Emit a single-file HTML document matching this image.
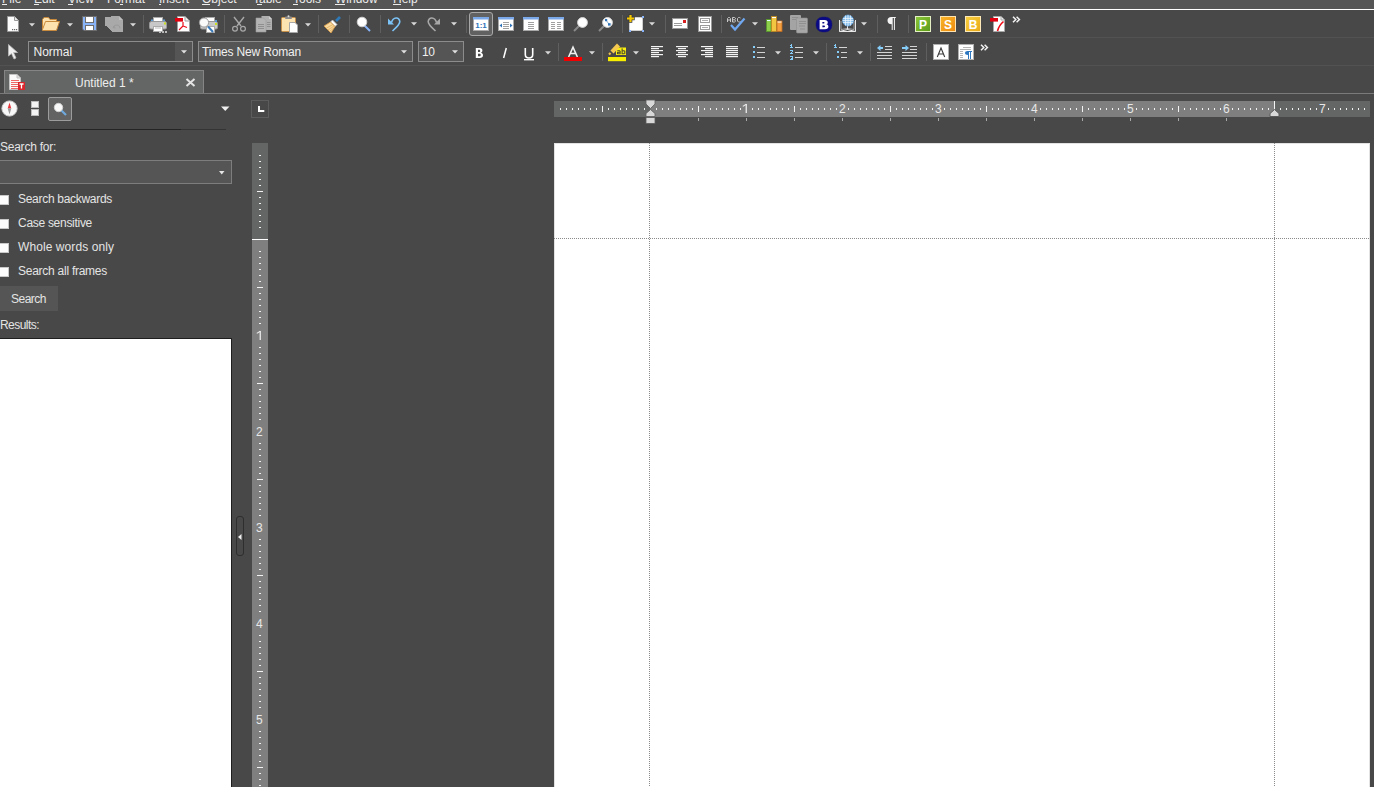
<!DOCTYPE html>
<html><head><meta charset="utf-8"><style>
html,body{margin:0;padding:0}
body{width:1374px;height:787px;overflow:hidden;position:relative;background:#484848;font-family:"Liberation Sans",sans-serif}
body>div,body>span,body>svg{position:absolute}
.t{white-space:nowrap;line-height:1}
</style></head><body>
<div style="left:0px;top:0px;width:1374px;height:9px;background:#555555"></div>
<span class="t" style="left:2px;top:-7px;font-size:12px;color:#ececec;">File</span>
<span class="t" style="left:34px;top:-7px;font-size:12px;color:#ececec;">Edit</span>
<span class="t" style="left:68px;top:-7px;font-size:12px;color:#ececec;">View</span>
<span class="t" style="left:107px;top:-7px;font-size:12px;color:#ececec;">Format</span>
<span class="t" style="left:159px;top:-7px;font-size:12px;color:#ececec;">Insert</span>
<span class="t" style="left:202px;top:-7px;font-size:12px;color:#ececec;">Object</span>
<span class="t" style="left:253px;top:-7px;font-size:12px;color:#ececec;">Table</span>
<span class="t" style="left:293px;top:-7px;font-size:12px;color:#ececec;">Tools</span>
<span class="t" style="left:335px;top:-7px;font-size:12px;color:#ececec;">Window</span>
<span class="t" style="left:393px;top:-7px;font-size:12px;color:#ececec;">Help</span>
<div style="left:0px;top:4px;width:0px;height:0px;"></div>
<div style="left:2px;top:4px;width:5px;height:1px;background:#ececec"></div>
<div style="left:34px;top:4px;width:5px;height:1px;background:#ececec"></div>
<div style="left:68px;top:4px;width:5px;height:1px;background:#ececec"></div>
<div style="left:120px;top:4px;width:3px;height:1px;background:#ececec"></div>
<div style="left:159px;top:4px;width:2px;height:1px;background:#ececec"></div>
<div style="left:202px;top:4px;width:8px;height:1px;background:#ececec"></div>
<div style="left:257px;top:4px;width:5px;height:1px;background:#ececec"></div>
<div style="left:293px;top:4px;width:5px;height:1px;background:#ececec"></div>
<div style="left:335px;top:4px;width:10px;height:1px;background:#ececec"></div>
<div style="left:393px;top:4px;width:8px;height:1px;background:#ececec"></div>
<div style="left:0px;top:9px;width:1374px;height:1px;background:#ffffff"></div>
<div style="left:0px;top:37px;width:1374px;height:1px;background:#525252"></div>
<div style="left:0px;top:65px;width:1374px;height:1px;background:#525252"></div>
<div style="left:0px;top:93px;width:1374px;height:1px;background:#7a7a7a"></div>
<svg style="left:6px;top:15px" width="14" height="18" viewBox="0 0 14 18"><path d="M1.5 1.5H8.5L12.5 5.5V16.5H1.5Z" fill="#fdfdfd" stroke="#9a9a9a"/><path d="M8.5 1.5V5.5H12.5" fill="#e8e8e8" stroke="#9a9a9a"/><rect x="6" y="14" width="1.2" height="1.2" fill="#666"/><rect x="8" y="14" width="1.2" height="1.2" fill="#666"/><rect x="10" y="14" width="1.2" height="1.2" fill="#666"/></svg>
<svg style="left:29px;top:23px" width="6" height="4" viewBox="0 0 6 4"><path d="M0 0.2H6L3 3.4Z" fill="#d8d8d8"/></svg>
<svg style="left:41px;top:16px" width="20" height="16" viewBox="0 0 20 16"><path d="M1.5 13.5V3.5L3 1.5H7.5L9 3.5H15.5V5.5" fill="#fde2ae" stroke="#c88a3c"/><path d="M1.5 13.5L4.5 5.5H18.5L15.5 14.5H1.5Z" fill="#fde3b0" stroke="#c88a3c"/></svg>
<svg style="left:67px;top:23px" width="6" height="4" viewBox="0 0 6 4"><path d="M0 0.2H6L3 3.4Z" fill="#d8d8d8"/></svg>
<svg style="left:81px;top:15px" width="17" height="17" viewBox="0 0 17 17"><path d="M1.5 1.5H15.5V15.5H3L1.5 14Z" fill="#8ab4f8" stroke="#6e6e6e"/><rect x="4.5" y="1.5" width="8" height="6" fill="#fff" stroke="#6e6e6e"/><rect x="4.5" y="10.5" width="8" height="5" fill="#fff" stroke="#6e6e6e"/></svg>
<svg style="left:104px;top:15px" width="20" height="18" viewBox="0 0 20 18"><path d="M1 2H7V1H15L19 5V17H8V16H7V15H6V14H5V13H4V12H3V11H1Z" fill="#a9a9a9"/><path d="M15 1V5H19Z" fill="#bdbdbd"/><path d="M9 12.5L10.5 10.5M9 12.5L11.5 13M9.8 11.8C11 9.5 16 9 16 13.5" stroke="#999" fill="none" stroke-width="1"/></svg>
<svg style="left:130px;top:23px" width="6" height="4" viewBox="0 0 6 4"><path d="M0 0.2H6L3 3.4Z" fill="#d8d8d8"/></svg>
<svg style="left:143px;top:15px" width="1" height="18" viewBox="0 0 1 18"><rect width="1" height="100" fill="#5f5f5f"/></svg>
<svg style="left:148px;top:16px" width="20" height="18" viewBox="0 0 20 18"><rect x="5.5" y="1.5" width="9" height="4.5" fill="#fff" stroke="#aaa"/><rect x="3" y="3.5" width="2" height="2" fill="#5b9bd5"/><rect x="15" y="3.5" width="2" height="2" fill="#5b9bd5"/><path d="M1.5 7.5Q1.5 5.5 3.5 5.5H16.5Q18.5 5.5 18.5 7.5V11.5Q18.5 13 17 13H3Q1.5 13 1.5 11.5Z" fill="#c8c8c8" stroke="#999"/><rect x="16" y="6.5" width="2" height="2" fill="#c8e020"/><rect x="5.5" y="10.5" width="9" height="5" fill="#fff" stroke="#aaa"/><path d="M7 12H13" stroke="#bbb"/><rect x="11" y="15" width="2" height="2" fill="#bbb"/><rect x="14" y="15" width="2" height="2" fill="#bbb"/><rect x="17" y="15" width="2" height="2" fill="#bbb"/></svg>
<svg style="left:174px;top:15px" width="17" height="18" viewBox="0 0 17 18"><path d="M3.5 1.5H11L15.5 6V16.5H3.5Z" fill="#fff" stroke="#a0a0a0"/><path d="M11 1.5V6H15.5" fill="#eee" stroke="#a0a0a0"/><rect x="1" y="3" width="8" height="3.6" fill="#e00010"/><path d="M9 7V11L5 15M9 11L13 12.5" stroke="#e8101c" stroke-width="1.2" fill="none"/></svg>
<svg style="left:198px;top:16px" width="21" height="18" viewBox="0 0 21 18"><rect x="7.5" y="1.5" width="9" height="4" fill="#fff" stroke="#aaa"/><path d="M2.5 7.5Q2.5 5.5 4.5 5.5H17.5Q19.5 5.5 19.5 7.5V11.5Q19.5 13 18 13H4Q2.5 13 2.5 11.5Z" fill="#c8c8c8" stroke="#999"/><rect x="17" y="4" width="2" height="2" fill="#5b9bd5"/><rect x="17" y="7" width="2" height="2" fill="#c8e020"/><rect x="8.5" y="10.5" width="8" height="6" fill="#fff" stroke="#aaa"/><path d="M10 10.5L15 16" stroke="#3a7ab8" stroke-width="2"/><circle cx="6" cy="6.5" r="4.6" fill="#fafafa" stroke="#9a9a9a"/></svg>
<svg style="left:224px;top:15px" width="1" height="18" viewBox="0 0 1 18"><rect width="1" height="100" fill="#5f5f5f"/></svg>
<svg style="left:231px;top:16px" width="16" height="17" viewBox="0 0 16 17"><path d="M3 1L10 10M13 1L6 10" stroke="#a8a8a8" stroke-width="1.4" fill="none"/><circle cx="4" cy="12.8" r="2.4" fill="none" stroke="#a8a8a8" stroke-width="1.2"/><circle cx="12" cy="12.8" r="2.4" fill="none" stroke="#a8a8a8" stroke-width="1.2"/></svg>
<svg style="left:255px;top:15px" width="18" height="18" viewBox="0 0 18 18"><path d="M6.5 1H14L17 4V15H6.5Z" fill="#b0b0b0"/><path d="M14 1V4H17" fill="#d0d0d0"/><path d="M1 3H8.5L11 5.5V17H1Z" fill="#b4b4b4" stroke="#9a9a9a" stroke-width="0.6"/><path d="M3 9.5H9M3 11.5H9M3 13.5H9M12 7.5H15.5M12 9.5H15.5M12 11.5H15.5" stroke="#8e8e8e" stroke-width="1"/></svg>
<svg style="left:280px;top:15px" width="19" height="19" viewBox="0 0 19 19"><rect x="1.5" y="2.5" width="14" height="14" rx="1" fill="#fde3b0" stroke="#c89048"/><rect x="5" y="1.5" width="7" height="2.5" rx="1" fill="#8c8c8c"/><circle cx="8.5" cy="1.2" r="1" fill="#ddd"/><path d="M9.5 7.5H15L17.5 10V17.5H9.5Z" fill="#fff" stroke="#a8a8a8"/></svg>
<svg style="left:305px;top:23px" width="6" height="4" viewBox="0 0 6 4"><path d="M0 0.2H6L3 3.4Z" fill="#d8d8d8"/></svg>
<svg style="left:318px;top:15px" width="1" height="18" viewBox="0 0 1 18"><rect width="1" height="100" fill="#5f5f5f"/></svg>
<svg style="left:323px;top:15px" width="19" height="19" viewBox="0 0 19 19"><path d="M13 6L17 2" stroke="#2e7ab8" stroke-width="2.6"/><path d="M9.5 5L14 9.5L12 11.5L7.5 7Z" fill="#fff" stroke="#bbb" stroke-width="0.8"/><path d="M7.5 7L12 11.5L8 18L1 11Z" fill="#f8d89c" stroke="#d89a48" stroke-width="0.8"/><path d="M3.5 13L10 9.5M5 15L11 11M6.5 16.5L11.5 12.5" stroke="#e0a858" stroke-width="0.7"/></svg>
<svg style="left:349px;top:15px" width="1" height="18" viewBox="0 0 1 18"><rect width="1" height="100" fill="#5f5f5f"/></svg>
<svg style="left:356px;top:16px" width="16" height="17" viewBox="0 0 16 17"><path d="M8.5 9.5L14 15" stroke="#8ab4f8" stroke-width="2"/><circle cx="6" cy="6" r="4.8" fill="#fff" stroke="#d0d0d0"/></svg>
<svg style="left:380px;top:15px" width="1" height="18" viewBox="0 0 1 18"><rect width="1" height="100" fill="#5f5f5f"/></svg>
<svg style="left:387px;top:15px" width="15" height="18" viewBox="0 0 15 18"><path d="M4.5 7.5C6 2 12.5 1.5 12.8 6.5C13 9 10 12 5.5 16" stroke="#7cc4f8" stroke-width="1.6" fill="none"/><path d="M1 3.5V9.5H7Z" fill="#7cc4f8"/></svg>
<svg style="left:411px;top:22px" width="6" height="4" viewBox="0 0 6 4"><path d="M0 0.2H6L3 3.4Z" fill="#d8d8d8"/></svg>
<svg style="left:426px;top:15px" width="15" height="18" viewBox="0 0 15 18"><path d="M10.5 7.5C9 2 2.5 1.5 2.2 6.5C2 9 5 12 9.5 16" stroke="#a8a8a8" stroke-width="1.6" fill="none"/><path d="M14 3.5V9.5H8Z" fill="#a8a8a8"/></svg>
<svg style="left:451px;top:22px" width="6" height="4" viewBox="0 0 6 4"><path d="M0 0.2H6L3 3.4Z" fill="#d8d8d8"/></svg>
<svg style="left:466px;top:15px" width="1" height="18" viewBox="0 0 1 18"><rect width="1" height="100" fill="#5f5f5f"/></svg>
<svg style="left:469px;top:12px" width="24" height="24" viewBox="0 0 24 24"><rect x="0.5" y="0.5" width="23" height="23" rx="2.5" fill="#616161" stroke="#a8a8a8"/></svg>
<svg style="left:473px;top:17px" width="16" height="14" viewBox="0 0 16 14"><rect x="0.5" y="0.5" width="15" height="13" fill="#fff" stroke="#a8a8a8"/><rect x="0" y="0" width="16" height="2.5" fill="#7aa8e8"/><text x="8" y="11" font-family="Liberation Sans" font-weight="bold" font-size="8" fill="#2f74b8" text-anchor="middle">1:1</text></svg>
<svg style="left:498px;top:17px" width="16" height="14" viewBox="0 0 16 14"><rect x="0.5" y="0.5" width="15" height="13" fill="#fff" stroke="#a8a8a8"/><rect x="0" y="0" width="16" height="2.5" fill="#7aa8e8"/><path d="M5 5.5H11M5 7.5H11M5 9.5H11M5 11.5H11" stroke="#a0a0a0"/><path d="M1.5 8.5L4 6.5V10.5Z M14.5 8.5L12 6.5V10.5Z" fill="#2f74b8"/></svg>
<svg style="left:523px;top:17px" width="16" height="14" viewBox="0 0 16 14"><rect x="0.5" y="0.5" width="15" height="13" fill="#fff" stroke="#a8a8a8"/><rect x="0" y="0" width="16" height="2.5" fill="#7aa8e8"/><path d="M5 5.5H11M5 7.5H11M5 9.5H11M5 11.5H11" stroke="#a0a0a0"/></svg>
<svg style="left:548px;top:17px" width="16" height="14" viewBox="0 0 16 14"><rect x="0.5" y="0.5" width="15" height="13" fill="#fff" stroke="#a8a8a8"/><rect x="0" y="0" width="16" height="2.5" fill="#7aa8e8"/><path d="M3 5.5H7M3 7.5H7M3 9.5H7M3 11.5H7M9 5.5H13M9 7.5H13M9 9.5H13M9 11.5H13" stroke="#a0a0a0"/></svg>
<svg style="left:572px;top:16px" width="17" height="17" viewBox="0 0 17 17"><path d="M7 10L2 15" stroke="#8a8a8a" stroke-width="2"/><circle cx="10.5" cy="6.5" r="4.9" fill="#fff" stroke="#d8d8d8"/></svg>
<svg style="left:597px;top:16px" width="17" height="17" viewBox="0 0 17 17"><path d="M7 10L2 15" stroke="#8a8a8a" stroke-width="2"/><circle cx="10.5" cy="6.5" r="4.9" fill="#fff" stroke="#d8d8d8"/><path d="M9 4L12.5 9" stroke="#8ac" stroke-width="0.9"/><rect x="8" y="3" width="2.2" height="2.2" fill="#2f74b8"/><rect x="11" y="7.2" width="2.6" height="2.4" fill="#2f74b8"/></svg>
<svg style="left:622px;top:15px" width="1" height="18" viewBox="0 0 1 18"><rect width="1" height="100" fill="#5f5f5f"/></svg>
<svg style="left:626px;top:14px" width="20" height="19" viewBox="0 0 20 19"><rect x="3.5" y="3.5" width="13" height="13" rx="1" fill="#fff" stroke="#cfcfcf"/><rect x="16" y="2" width="2" height="2" fill="#8ab4f8"/><rect x="3" y="16" width="2" height="2" fill="#8ab4f8"/><rect x="16" y="16" width="2" height="2" fill="#8ab4f8"/><path d="M4.5 0.3V8.7M0.3 4.5H8.7" stroke="#3a3a3a" stroke-width="3.6"/><path d="M4.5 1V8M1 4.5H8" stroke="#f5c800" stroke-width="2.2"/></svg>
<svg style="left:649px;top:22px" width="6" height="4" viewBox="0 0 6 4"><path d="M0 0.2H6L3 3.4Z" fill="#d8d8d8"/></svg>
<svg style="left:665px;top:15px" width="1" height="18" viewBox="0 0 1 18"><rect width="1" height="100" fill="#5f5f5f"/></svg>
<svg style="left:671px;top:17px" width="18" height="13" viewBox="0 0 18 13"><rect x="1.5" y="1.5" width="15" height="10" fill="#fff" stroke="#999"/><rect x="12" y="3" width="3" height="3" fill="#d81e1e"/><path d="M3 6.5H11M3 8.5H11" stroke="#9a9a9a"/></svg>
<svg style="left:697px;top:15px" width="16" height="18" viewBox="0 0 16 18"><rect x="1.5" y="1.5" width="13" height="15" fill="#fff" stroke="#999"/><rect x="3.5" y="3.5" width="9" height="4" fill="none" stroke="#9a9a9a"/><rect x="3.5" y="10.5" width="9" height="4" fill="none" stroke="#9a9a9a"/><path d="M5 5.5H11M5 12.5H11" stroke="#aaa"/></svg>
<svg style="left:721px;top:15px" width="1" height="18" viewBox="0 0 1 18"><rect width="1" height="100" fill="#5f5f5f"/></svg>
<svg style="left:726px;top:16px" width="20" height="16" viewBox="0 0 20 16"><g fill="none" stroke="#c8c8c8" stroke-width="1"><path d="M1.5 6V2.5L2.5 1.5H3.5L4.5 2.5V6M1.5 4H4.5"/><path d="M6.5 6V1.5H8.5L9.5 2.3V3L8.5 3.8L9.5 4.6V5.3L8.5 6H6.5M6.5 3.8H8.5"/><path d="M14.5 2L13.5 1.5H12.5L11.5 2.5V5L12.5 6H13.5L14.5 5.5"/></g><path d="M5 9L9 13.5L18.5 2.5" stroke="#6fa8f0" stroke-width="2.2" fill="none"/></svg>
<svg style="left:752px;top:22px" width="6" height="4" viewBox="0 0 6 4"><path d="M0 0.2H6L3 3.4Z" fill="#d8d8d8"/></svg>
<svg style="left:765px;top:15px" width="18" height="18" viewBox="0 0 18 18"><rect x="1.5" y="4.5" width="4.5" height="12" fill="#8ccf4a" stroke="#5a9a2a" stroke-width="0.8"/><rect x="6.5" y="1.5" width="5" height="15" fill="#f2c640" stroke="#c08a20" stroke-width="0.8"/><rect x="12" y="6" width="5" height="10.5" fill="#f5a040" stroke="#c06a20" stroke-width="0.8"/><rect x="2" y="5" width="3.5" height="1" fill="#dff"/><rect x="7" y="2" width="4" height="1" fill="#fff"/><rect x="12.5" y="6.5" width="4" height="1" fill="#fff"/></svg>
<svg style="left:789px;top:14px" width="20" height="20" viewBox="0 0 20 20"><rect x="1" y="1" width="11" height="15" rx="1" fill="#a4a4a4"/><rect x="7.5" y="4" width="11" height="15" rx="1" fill="#a8a8a8" stroke="#8e8e8e" stroke-width="0.6"/><path d="M3 3.5H9M3 5.5H7M10 7.5H17M10 9.5H17M10 12H16M11 15H16" stroke="#8a8a8a" stroke-width="0.8"/></svg>
<svg style="left:815px;top:16px" width="18" height="17" viewBox="0 0 18 17"><rect x="1" y="1" width="16" height="15" rx="6.5" fill="#0a0a84" stroke="#1a1a6a" stroke-width="0.5"/><path fill-rule="evenodd" fill="#fff" d="M4.6 4H9.6C11.8 4 12.8 5 12.8 6.4C12.8 7.4 12.2 8 11.4 8.3C12.6 8.6 13.4 9.4 13.4 10.7C13.4 12.3 12.2 13.2 10 13.2H4.6Z M7.4 6V7.4H8.8C9.3 7.4 9.5 7.2 9.5 6.7C9.5 6.2 9.3 6 8.8 6Z M7.4 9.4V11.2H9.1C9.7 11.2 10 10.9 10 10.3C10 9.7 9.7 9.4 9.1 9.4Z"/></svg>
<svg style="left:838px;top:14px" width="19" height="19" viewBox="0 0 19 19"><path d="M1.5 6V17.5H17.5V6M1.5 17.5L9.5 15.5L17.5 17.5M9.5 10V15.5" stroke="#e8e8e8" fill="none" stroke-width="1"/><path d="M3 7V15.5L9 14.5M16 7V15.5L10 14.5" stroke="#bbb" fill="none" stroke-width="0.8"/><circle cx="10" cy="6.5" r="5.5" fill="#8ac0ec" stroke="#5e9ad0" stroke-width="0.8"/><path d="M5 4.5H15M4.5 6.5H15.5M5 8.5H15M7.5 1.5V11.5M10 1V12M12.5 1.5V11.5" stroke="#f0f8ff" stroke-width="0.7"/></svg>
<svg style="left:861px;top:22px" width="6" height="4" viewBox="0 0 6 4"><path d="M0 0.2H6L3 3.4Z" fill="#d8d8d8"/></svg>
<svg style="left:877px;top:15px" width="1" height="18" viewBox="0 0 1 18"><rect width="1" height="100" fill="#5f5f5f"/></svg>
<svg style="left:886px;top:16px" width="11" height="15" viewBox="0 0 11 15"><path d="M5.2 1H9.8V1.9H8.9V14H7.9V1.9H6.7V14H5.7V8.3C2.8 8.3 1.5 6.8 1.5 4.6C1.5 2.3 3 1 5.2 1Z" fill="#f4f4f4"/></svg>
<svg style="left:908px;top:15px" width="1" height="18" viewBox="0 0 1 18"><rect width="1" height="100" fill="#5f5f5f"/></svg>
<svg style="left:914px;top:15px" width="18" height="18" viewBox="0 0 18 18"><defs><linearGradient id="gP914" x1="0" y1="0" x2="1" y2="1"><stop offset="0" stop-color="#8cc83a"/><stop offset="1" stop-color="#5c9a18"/></linearGradient></defs><rect x="1.5" y="1.5" width="15" height="15" fill="url(#gP914)" stroke="#e4f0c4"/><text x="9" y="13.5" font-family="Liberation Sans" font-weight="bold" font-size="12" fill="#fff" text-anchor="middle">P</text></svg>
<svg style="left:939px;top:15px" width="18" height="18" viewBox="0 0 18 18"><defs><linearGradient id="gS939" x1="0" y1="0" x2="1" y2="1"><stop offset="0" stop-color="#f8b428"/><stop offset="1" stop-color="#ee8a10"/></linearGradient></defs><rect x="1.5" y="1.5" width="15" height="15" fill="url(#gS939)" stroke="#fde4b0"/><text x="9" y="13.5" font-family="Liberation Sans" font-weight="bold" font-size="12" fill="#fff" text-anchor="middle">S</text></svg>
<svg style="left:964px;top:15px" width="18" height="18" viewBox="0 0 18 18"><defs><linearGradient id="gB964" x1="0" y1="0" x2="1" y2="1"><stop offset="0" stop-color="#f8d040"/><stop offset="1" stop-color="#e8a818"/></linearGradient></defs><rect x="1.5" y="1.5" width="15" height="15" fill="url(#gB964)" stroke="#fdeab8"/><text x="9" y="13.5" font-family="Liberation Sans" font-weight="bold" font-size="12" fill="#fff" text-anchor="middle">B</text></svg>
<svg style="left:989px;top:15px" width="17" height="18" viewBox="0 0 17 18"><path d="M4.5 1.5H12L15.5 5V16.5H4.5Z" fill="#fff" stroke="#a8a8a8"/><path d="M12 1.5V5H15.5" fill="#eee" stroke="#a8a8a8"/><rect x="1" y="3" width="8" height="3.6" fill="#e00010"/><path d="M8.5 16C9.5 12 11.5 9 14.5 6.5" stroke="#ee0a14" stroke-width="1.6" fill="none"/></svg>
<svg style="left:1012px;top:16px" width="9" height="7" viewBox="0 0 9 7"><path d="M1 0.8L3.8 3.5L1 6.2M4.6 0.8L7.4 3.5L4.6 6.2" stroke="#f4f4f4" stroke-width="1.5" fill="none"/></svg>
<svg style="left:7px;top:43px" width="12" height="18" viewBox="0 0 12 18"><path d="M1.5 1.5V13L4.5 10.5L7 16L9 15L6.5 9.5H10.5Z" fill="#f0f0f0" stroke="#bdbdbd" stroke-width="0.8"/></svg>
<svg style="left:475px;top:48px" width="9" height="10" viewBox="0 0 9 10"><path fill-rule="evenodd" fill="#fff" d="M0.8 0H4.6C6.6 0 7.4 1 7.4 2.5C7.4 3.5 6.9 4.3 6 4.7C7.2 5 8 5.9 8 7.2C8 9 6.8 10 4.6 10H0.8Z M3 1.8V4H4.2C4.9 4 5.2 3.6 5.2 2.9C5.2 2.2 4.9 1.8 4.2 1.8Z M3 5.7V8.2H4.4C5.2 8.2 5.7 7.8 5.7 6.9C5.7 6.1 5.2 5.7 4.4 5.7Z"/></svg>
<svg style="left:500px;top:46px" width="9" height="14" viewBox="0 0 9 14"><path d="M6.3 2L3.6 12" stroke="#fff" stroke-width="1.5"/></svg>
<svg style="left:523px;top:46px" width="12" height="16" viewBox="0 0 12 16"><path d="M2.3 2V8.5C2.3 11 3.8 12 6 12C8.2 12 9.7 11 9.7 8.5V2" stroke="#fff" stroke-width="1.6" fill="none"/><rect x="1" y="13" width="10" height="1.4" fill="#fff"/></svg>
<svg style="left:545px;top:51px" width="6" height="4" viewBox="0 0 6 4"><path d="M0 0.2H6L3 3.4Z" fill="#d8d8d8"/></svg>
<svg style="left:558px;top:43px" width="1" height="18" viewBox="0 0 1 18"><rect width="1" height="100" fill="#5f5f5f"/></svg>
<svg style="left:563px;top:45px" width="20" height="17" viewBox="0 0 20 17"><path d="M5.6 12L10 2.2L14.4 12M7.2 8.5H12.8" stroke="#f0f0f0" stroke-width="1.6" fill="none"/><rect x="1" y="12" width="18" height="4" fill="#f00000"/></svg>
<svg style="left:589px;top:51px" width="6" height="4" viewBox="0 0 6 4"><path d="M0 0.2H6L3 3.4Z" fill="#d8d8d8"/></svg>
<svg style="left:602px;top:43px" width="1" height="18" viewBox="0 0 1 18"><rect width="1" height="100" fill="#5f5f5f"/></svg>
<svg style="left:607px;top:42px" width="20" height="20" viewBox="0 0 20 20"><rect x="9" y="5.5" width="10" height="7.5" fill="#f8ee10"/><g fill="#3c3c2c"><rect x="10.3" y="8.3" width="2.6" height="1"/><rect x="12.6" y="8.8" width="1" height="3.4"/><rect x="10.3" y="9.9" width="2.5" height="0.9"/><rect x="10" y="10.3" width="1" height="1.6"/><rect x="10.3" y="11.3" width="2.5" height="0.9"/><rect x="14.6" y="6.4" width="1" height="5.8"/><rect x="15.3" y="8.3" width="2.3" height="1"/><rect x="17.3" y="8.8" width="1" height="3"/><rect x="15.3" y="11.3" width="2.3" height="0.9"/></g><path d="M5 10L11.5 3" stroke="#f5c850" stroke-width="4.2"/><path d="M2 12.5L3.5 11" stroke="#f0c050" stroke-width="2.2"/><rect x="1" y="15" width="18" height="4.2" fill="#f8ee00"/></svg>
<svg style="left:633px;top:51px" width="6" height="4" viewBox="0 0 6 4"><path d="M0 0.2H6L3 3.4Z" fill="#d8d8d8"/></svg>
<svg style="left:651px;top:46px" width="13" height="12" viewBox="0 0 13 12"><rect x="0" y="0" width="12" height="1.2" fill="#f4f4f4"/><rect x="0" y="2" width="8" height="1.2" fill="#f4f4f4"/><rect x="0" y="4" width="12" height="1.2" fill="#f4f4f4"/><rect x="0" y="6" width="8" height="1.2" fill="#f4f4f4"/><rect x="0" y="8" width="12" height="1.2" fill="#f4f4f4"/><rect x="0" y="10" width="8" height="1.2" fill="#f4f4f4"/></svg>
<svg style="left:676px;top:46px" width="13" height="12" viewBox="0 0 13 12"><rect x="0" y="0" width="12" height="1.2" fill="#f4f4f4"/><rect x="2" y="2" width="8" height="1.2" fill="#f4f4f4"/><rect x="0" y="4" width="12" height="1.2" fill="#f4f4f4"/><rect x="2" y="6" width="8" height="1.2" fill="#f4f4f4"/><rect x="0" y="8" width="12" height="1.2" fill="#f4f4f4"/><rect x="2" y="10" width="8" height="1.2" fill="#f4f4f4"/></svg>
<svg style="left:701px;top:46px" width="13" height="12" viewBox="0 0 13 12"><rect x="0" y="0" width="12" height="1.2" fill="#f4f4f4"/><rect x="4" y="2" width="8" height="1.2" fill="#f4f4f4"/><rect x="0" y="4" width="12" height="1.2" fill="#f4f4f4"/><rect x="4" y="6" width="8" height="1.2" fill="#f4f4f4"/><rect x="0" y="8" width="12" height="1.2" fill="#f4f4f4"/><rect x="4" y="10" width="8" height="1.2" fill="#f4f4f4"/></svg>
<svg style="left:726px;top:46px" width="13" height="12" viewBox="0 0 13 12"><rect x="0" y="0" width="12" height="1.2" fill="#f4f4f4"/><rect x="0" y="2" width="12" height="1.2" fill="#f4f4f4"/><rect x="0" y="4" width="12" height="1.2" fill="#f4f4f4"/><rect x="0" y="6" width="12" height="1.2" fill="#f4f4f4"/><rect x="0" y="8" width="12" height="1.2" fill="#f4f4f4"/><rect x="0" y="10" width="12" height="1.2" fill="#f4f4f4"/></svg>
<svg style="left:752px;top:45px" width="14" height="14" viewBox="0 0 14 14"><rect x="1" y="1" width="2" height="2" fill="#86cdfa"/><rect x="1" y="6" width="2" height="2" fill="#86cdfa"/><rect x="1" y="11" width="2" height="2" fill="#86cdfa"/><rect x="5" y="2" width="8" height="1" fill="#d4d4d4"/><rect x="5" y="7" width="8" height="1" fill="#d4d4d4"/><rect x="5" y="12" width="8" height="1" fill="#d4d4d4"/></svg>
<svg style="left:775px;top:51px" width="6" height="4" viewBox="0 0 6 4"><path d="M0 0.2H6L3 3.4Z" fill="#d8d8d8"/></svg>
<svg style="left:789px;top:44px" width="15" height="16" viewBox="0 0 15 16"><rect x="2" y="0" width="1" height="4" fill="#86cdfa"/><rect x="1" y="1" width="1" height="1" fill="#86cdfa"/><rect x="1" y="3" width="3" height="1" fill="#86cdfa"/><rect x="1" y="6" width="3" height="1" fill="#86cdfa"/><rect x="3" y="7" width="1" height="1" fill="#86cdfa"/><rect x="2" y="8" width="1" height="1" fill="#86cdfa"/><rect x="1" y="9" width="3" height="1" fill="#86cdfa"/><rect x="1" y="12" width="3" height="1" fill="#86cdfa"/><rect x="3" y="13" width="1" height="1" fill="#86cdfa"/><rect x="2" y="14" width="2" height="1" fill="#86cdfa"/><rect x="1" y="15" width="3" height="1" fill="#86cdfa"/><rect x="6" y="3" width="8" height="1" fill="#d4d4d4"/><rect x="6" y="8" width="8" height="1" fill="#d4d4d4"/><rect x="6" y="13" width="8" height="1" fill="#d4d4d4"/></svg>
<svg style="left:813px;top:51px" width="6" height="4" viewBox="0 0 6 4"><path d="M0 0.2H6L3 3.4Z" fill="#d8d8d8"/></svg>
<svg style="left:826px;top:43px" width="1" height="18" viewBox="0 0 1 18"><rect width="1" height="100" fill="#5f5f5f"/></svg>
<svg style="left:833px;top:44px" width="15" height="16" viewBox="0 0 15 16"><rect x="2" y="0" width="1" height="4" fill="#86cdfa"/><rect x="1" y="1" width="1" height="1" fill="#86cdfa"/><rect x="1" y="3" width="3" height="1" fill="#86cdfa"/><rect x="4" y="7" width="2" height="2" fill="#86cdfa"/><rect x="4" y="12" width="2" height="2" fill="#86cdfa"/><rect x="6" y="3" width="8" height="1" fill="#d4d4d4"/><rect x="8" y="8" width="6" height="1" fill="#d4d4d4"/><rect x="8" y="13" width="6" height="1" fill="#d4d4d4"/></svg>
<svg style="left:857px;top:51px" width="6" height="4" viewBox="0 0 6 4"><path d="M0 0.2H6L3 3.4Z" fill="#d8d8d8"/></svg>
<svg style="left:870px;top:43px" width="1" height="18" viewBox="0 0 1 18"><rect width="1" height="100" fill="#5f5f5f"/></svg>
<svg style="left:876px;top:44px" width="17" height="16" viewBox="0 0 17 16"><path d="M1 4L4.5 1V7Z" fill="#86cdfa"/><rect x="4" y="3" width="3" height="2" fill="#86cdfa"/><rect x="9" y="2" width="7" height="1" fill="#d4d4d4"/><rect x="9" y="5" width="7" height="1" fill="#d4d4d4"/><rect x="1" y="8" width="15" height="1" fill="#d4d4d4"/><rect x="1" y="11" width="15" height="1" fill="#d4d4d4"/><rect x="1" y="14" width="15" height="1" fill="#d4d4d4"/></svg>
<svg style="left:901px;top:44px" width="17" height="16" viewBox="0 0 17 16"><path d="M8 4L4.5 1V7Z" fill="#86cdfa"/><rect x="1" y="3" width="4" height="2" fill="#86cdfa"/><rect x="9" y="2" width="7" height="1" fill="#d4d4d4"/><rect x="9" y="5" width="7" height="1" fill="#d4d4d4"/><rect x="1" y="8" width="15" height="1" fill="#d4d4d4"/><rect x="1" y="11" width="15" height="1" fill="#d4d4d4"/><rect x="1" y="14" width="15" height="1" fill="#d4d4d4"/></svg>
<svg style="left:926px;top:43px" width="1" height="18" viewBox="0 0 1 18"><rect width="1" height="100" fill="#5f5f5f"/></svg>
<svg style="left:932px;top:43px" width="18" height="18" viewBox="0 0 18 18"><rect x="1.5" y="1.5" width="15" height="15" fill="#fff" stroke="#b0b0b0"/><path d="M5.3 14L9 5L12.7 14M6.6 11H11.4" stroke="#3a3a3a" stroke-width="1.1" fill="none"/></svg>
<svg style="left:957px;top:43px" width="18" height="18" viewBox="0 0 18 18"><rect x="1.5" y="1.5" width="15" height="15" fill="#fff" stroke="#b0b0b0"/><rect x="6" y="4" width="8" height="1" fill="#b4b4b4"/><rect x="3" y="6" width="11" height="1" fill="#b4b4b4"/><rect x="3" y="8" width="3" height="1" fill="#b4b4b4"/><rect x="3" y="10" width="3" height="1" fill="#b4b4b4"/><rect x="3" y="12" width="3" height="1" fill="#b4b4b4"/><rect x="3" y="14" width="3" height="1" fill="#b4b4b4"/><path d="M10.5 8H15V9H14V16H13V9H12V16H11V12C9 12 8 11 8 10C8 8.8 9 8 10.5 8Z" fill="#2f78c0"/></svg>
<svg style="left:980px;top:44px" width="9" height="7" viewBox="0 0 9 7"><path d="M1 0.8L3.8 3.5L1 6.2M4.6 0.8L7.4 3.5L4.6 6.2" stroke="#f4f4f4" stroke-width="1.5" fill="none"/></svg>
<div style="left:28px;top:41px;width:165px;height:21px;background:#484848;border:1px solid #8c8c8c;box-sizing:border-box"></div>
<div style="left:175px;top:42px;width:17px;height:19px;background:#555555"></div>
<svg style="left:181px;top:50px" width="6" height="4" viewBox="0 0 6 4"><path d="M0 0.2H6L3 3.4Z" fill="#e0e0e0"/></svg>
<span class="t" style="left:33.5px;top:46px;font-size:12px;color:#f0f0f0;">Normal</span>
<div style="left:198px;top:41px;width:215px;height:21px;background:#555555;border:1px solid #8c8c8c;box-sizing:border-box"></div>
<svg style="left:401px;top:50px" width="6" height="4" viewBox="0 0 6 4"><path d="M0 0.2H6L3 3.4Z" fill="#e0e0e0"/></svg>
<span class="t" style="left:202px;top:46px;font-size:12px;color:#f0f0f0;letter-spacing:-0.173px;">Times New Roman</span>
<div style="left:418px;top:41px;width:46px;height:21px;background:#555555;border:1px solid #8c8c8c;box-sizing:border-box"></div>
<svg style="left:452px;top:50px" width="6" height="4" viewBox="0 0 6 4"><path d="M0 0.2H6L3 3.4Z" fill="#e0e0e0"/></svg>
<span class="t" style="left:422px;top:46px;font-size:12px;color:#f0f0f0;letter-spacing:-0.422px;">10</span>
<div style="left:4px;top:70px;width:200px;height:23px;background:#646665;border:1px solid #858585;border-bottom:none;box-sizing:border-box"></div>
<span class="t" style="left:75px;top:77px;font-size:12px;color:#eeeeee;">Untitled 1 *</span>
<svg style="left:185px;top:78px" width="11" height="9" viewBox="0 0 11 9"><path d="M1.5 1L9.5 8M9.5 1L1.5 8" stroke="#e4e4e4" stroke-width="2"/></svg>
<svg style="left:9px;top:74px" width="17" height="17" viewBox="0 0 17 17"><path d="M0.5 0.5H8L11.5 4V15.5H0.5Z" fill="#fafafa" stroke="#c4c4c4"/><path d="M8 0.5V4H11.5" fill="#ddd" stroke="#c4c4c4"/><path d="M2 6.5H10M2 8.5H10M2 10.5H9M2 12.5H9M2 14.5H9" stroke="#e66" stroke-width="1"/><rect x="9" y="8" width="7" height="8" fill="#d9262c"/><path d="M10.5 10H14.5M12.5 10V14.5" stroke="#fff" stroke-width="1.3"/></svg>
<svg style="left:1px;top:100px" width="17" height="17" viewBox="0 0 17 17"><circle cx="8.5" cy="8.5" r="7.6" fill="#f8f8f8" stroke="#cfcfcf"/><path d="M8.5 2.5L10.3 8.5H6.7Z" fill="#e8343a"/><path d="M8.5 14.5L10.3 8.5H6.7Z" fill="#9a9a9a"/></svg>
<svg style="left:31px;top:101px" width="8" height="16" viewBox="0 0 8 16"><rect x="0.5" y="0.5" width="7" height="6" fill="#f4f4f4" stroke="#bbb"/><rect x="0.5" y="8.5" width="7" height="6" fill="#f4f4f4" stroke="#bbb"/></svg>
<div style="left:48px;top:97px;width:24px;height:24px;background:#636363;border:1px solid #9c9c9c;border-radius:2px;box-sizing:border-box"></div>
<svg style="left:53px;top:102px" width="15" height="15" viewBox="0 0 15 15"><path d="M7 7L13 13" stroke="#6fa8dc" stroke-width="2.2"/><circle cx="5.5" cy="5.5" r="4.2" fill="#fafafa" stroke="#cfcfcf"/></svg>
<svg style="left:221px;top:106px" width="9" height="6" viewBox="0 0 9 6"><path d="M0 0.5H8.5L4.25 5Z" fill="#f0f0f0"/></svg>
<div style="left:0px;top:129px;width:181px;height:1px;background:#242424"></div>
<div style="left:181px;top:129px;width:45px;height:1px;background:#343434"></div>
<span class="t" style="left:0px;top:141px;font-size:12px;color:#e4e4e4;letter-spacing:-0.243px;">Search for:</span>
<div style="left:-2px;top:160px;width:234px;height:24px;background:#555555;border:1px solid #7d7d7d;box-sizing:border-box"></div>
<svg style="left:219px;top:171px" width="6" height="4" viewBox="0 0 6 4"><path d="M0 0H5.5L2.75 3.5Z" fill="#e6e6e6"/></svg>
<div style="left:-3px;top:195px;width:12px;height:10px;background:#fcfcfc;border:1px solid #c8c8c8;box-sizing:border-box"></div>
<span class="t" style="left:18px;top:193px;font-size:12px;color:#e4e4e4;letter-spacing:-0.294px;">Search backwards</span>
<div style="left:-3px;top:219px;width:12px;height:10px;background:#fcfcfc;border:1px solid #c8c8c8;box-sizing:border-box"></div>
<span class="t" style="left:18px;top:217px;font-size:12px;color:#e4e4e4;letter-spacing:-0.288px;">Case sensitive</span>
<div style="left:-3px;top:243px;width:12px;height:10px;background:#fcfcfc;border:1px solid #c8c8c8;box-sizing:border-box"></div>
<span class="t" style="left:18px;top:241px;font-size:12px;color:#e4e4e4;letter-spacing:0.081px;">Whole words only</span>
<div style="left:-3px;top:267px;width:12px;height:10px;background:#fcfcfc;border:1px solid #c8c8c8;box-sizing:border-box"></div>
<span class="t" style="left:18px;top:265px;font-size:12px;color:#e4e4e4;letter-spacing:-0.256px;">Search all frames</span>
<div style="left:0px;top:286px;width:58px;height:25px;background:#555555"></div>
<span class="t" style="left:11px;top:293px;font-size:12px;color:#e4e4e4;letter-spacing:-0.503px;">Search</span>
<span class="t" style="left:0px;top:319px;font-size:12px;color:#e4e4e4;letter-spacing:-0.543px;">Results:</span>
<div style="left:-1px;top:338px;width:233px;height:460px;background:#ffffff;border:1px solid #1e1e1e;box-sizing:border-box"></div>
<div style="left:236px;top:516px;width:8px;height:40px;background:#484848;border:1px solid #2e2e2e;border-radius:3px;box-sizing:border-box"></div>
<svg style="left:238px;top:534px" width="4" height="6" viewBox="0 0 4 6"><path d="M3.5 0V6L0 3Z" fill="#f0f0f0"/></svg>
<div style="left:251px;top:100px;width:18px;height:18px;border:1px solid #5c5c5c;box-sizing:border-box"></div>
<svg style="left:257px;top:105px" width="9" height="9" viewBox="0 0 9 9"><path d="M2 1V6H7.3" fill="none" stroke="#fff" stroke-width="2"/></svg>
<div style="left:252px;top:143px;width:16px;height:96px;background:#646665"></div>
<div style="left:252px;top:239px;width:16px;height:560px;background:#7f7f7f"></div>
<div style="left:252px;top:239px;width:16px;height:1px;background:#ffffff"></div>
<div style="left:259px;top:155px;width:2px;height:1px;background:#f2f2f2"></div>
<div style="left:259px;top:161px;width:2px;height:1px;background:#f2f2f2"></div>
<div style="left:259px;top:167px;width:2px;height:1px;background:#f2f2f2"></div>
<div style="left:259px;top:173px;width:2px;height:1px;background:#f2f2f2"></div>
<div style="left:259px;top:179px;width:2px;height:1px;background:#f2f2f2"></div>
<div style="left:259px;top:185px;width:2px;height:1px;background:#f2f2f2"></div>
<div style="left:257px;top:191px;width:6px;height:1px;background:#f2f2f2"></div>
<div style="left:259px;top:197px;width:2px;height:1px;background:#f2f2f2"></div>
<div style="left:259px;top:203px;width:2px;height:1px;background:#f2f2f2"></div>
<div style="left:259px;top:209px;width:2px;height:1px;background:#f2f2f2"></div>
<div style="left:259px;top:215px;width:2px;height:1px;background:#f2f2f2"></div>
<div style="left:259px;top:221px;width:2px;height:1px;background:#f2f2f2"></div>
<div style="left:259px;top:227px;width:2px;height:1px;background:#f2f2f2"></div>
<div style="left:259px;top:251px;width:2px;height:1px;background:#f2f2f2"></div>
<div style="left:259px;top:257px;width:2px;height:1px;background:#f2f2f2"></div>
<div style="left:259px;top:263px;width:2px;height:1px;background:#f2f2f2"></div>
<div style="left:259px;top:269px;width:2px;height:1px;background:#f2f2f2"></div>
<div style="left:259px;top:275px;width:2px;height:1px;background:#f2f2f2"></div>
<div style="left:259px;top:281px;width:2px;height:1px;background:#f2f2f2"></div>
<div style="left:257px;top:287px;width:6px;height:1px;background:#f2f2f2"></div>
<div style="left:259px;top:293px;width:2px;height:1px;background:#f2f2f2"></div>
<div style="left:259px;top:299px;width:2px;height:1px;background:#f2f2f2"></div>
<div style="left:259px;top:305px;width:2px;height:1px;background:#f2f2f2"></div>
<div style="left:259px;top:311px;width:2px;height:1px;background:#f2f2f2"></div>
<div style="left:259px;top:317px;width:2px;height:1px;background:#f2f2f2"></div>
<div style="left:259px;top:323px;width:2px;height:1px;background:#f2f2f2"></div>
<div style="left:259px;top:347px;width:2px;height:1px;background:#f2f2f2"></div>
<div style="left:259px;top:353px;width:2px;height:1px;background:#f2f2f2"></div>
<div style="left:259px;top:359px;width:2px;height:1px;background:#f2f2f2"></div>
<div style="left:259px;top:365px;width:2px;height:1px;background:#f2f2f2"></div>
<div style="left:259px;top:371px;width:2px;height:1px;background:#f2f2f2"></div>
<div style="left:259px;top:377px;width:2px;height:1px;background:#f2f2f2"></div>
<div style="left:257px;top:383px;width:6px;height:1px;background:#f2f2f2"></div>
<div style="left:259px;top:389px;width:2px;height:1px;background:#f2f2f2"></div>
<div style="left:259px;top:395px;width:2px;height:1px;background:#f2f2f2"></div>
<div style="left:259px;top:401px;width:2px;height:1px;background:#f2f2f2"></div>
<div style="left:259px;top:407px;width:2px;height:1px;background:#f2f2f2"></div>
<div style="left:259px;top:413px;width:2px;height:1px;background:#f2f2f2"></div>
<div style="left:259px;top:419px;width:2px;height:1px;background:#f2f2f2"></div>
<div style="left:259px;top:443px;width:2px;height:1px;background:#f2f2f2"></div>
<div style="left:259px;top:449px;width:2px;height:1px;background:#f2f2f2"></div>
<div style="left:259px;top:455px;width:2px;height:1px;background:#f2f2f2"></div>
<div style="left:259px;top:461px;width:2px;height:1px;background:#f2f2f2"></div>
<div style="left:259px;top:467px;width:2px;height:1px;background:#f2f2f2"></div>
<div style="left:259px;top:473px;width:2px;height:1px;background:#f2f2f2"></div>
<div style="left:257px;top:479px;width:6px;height:1px;background:#f2f2f2"></div>
<div style="left:259px;top:485px;width:2px;height:1px;background:#f2f2f2"></div>
<div style="left:259px;top:491px;width:2px;height:1px;background:#f2f2f2"></div>
<div style="left:259px;top:497px;width:2px;height:1px;background:#f2f2f2"></div>
<div style="left:259px;top:503px;width:2px;height:1px;background:#f2f2f2"></div>
<div style="left:259px;top:509px;width:2px;height:1px;background:#f2f2f2"></div>
<div style="left:259px;top:515px;width:2px;height:1px;background:#f2f2f2"></div>
<div style="left:259px;top:539px;width:2px;height:1px;background:#f2f2f2"></div>
<div style="left:259px;top:545px;width:2px;height:1px;background:#f2f2f2"></div>
<div style="left:259px;top:551px;width:2px;height:1px;background:#f2f2f2"></div>
<div style="left:259px;top:557px;width:2px;height:1px;background:#f2f2f2"></div>
<div style="left:259px;top:563px;width:2px;height:1px;background:#f2f2f2"></div>
<div style="left:259px;top:569px;width:2px;height:1px;background:#f2f2f2"></div>
<div style="left:257px;top:575px;width:6px;height:1px;background:#f2f2f2"></div>
<div style="left:259px;top:581px;width:2px;height:1px;background:#f2f2f2"></div>
<div style="left:259px;top:587px;width:2px;height:1px;background:#f2f2f2"></div>
<div style="left:259px;top:593px;width:2px;height:1px;background:#f2f2f2"></div>
<div style="left:259px;top:599px;width:2px;height:1px;background:#f2f2f2"></div>
<div style="left:259px;top:605px;width:2px;height:1px;background:#f2f2f2"></div>
<div style="left:259px;top:611px;width:2px;height:1px;background:#f2f2f2"></div>
<div style="left:259px;top:635px;width:2px;height:1px;background:#f2f2f2"></div>
<div style="left:259px;top:641px;width:2px;height:1px;background:#f2f2f2"></div>
<div style="left:259px;top:647px;width:2px;height:1px;background:#f2f2f2"></div>
<div style="left:259px;top:653px;width:2px;height:1px;background:#f2f2f2"></div>
<div style="left:259px;top:659px;width:2px;height:1px;background:#f2f2f2"></div>
<div style="left:259px;top:665px;width:2px;height:1px;background:#f2f2f2"></div>
<div style="left:257px;top:671px;width:6px;height:1px;background:#f2f2f2"></div>
<div style="left:259px;top:677px;width:2px;height:1px;background:#f2f2f2"></div>
<div style="left:259px;top:683px;width:2px;height:1px;background:#f2f2f2"></div>
<div style="left:259px;top:689px;width:2px;height:1px;background:#f2f2f2"></div>
<div style="left:259px;top:695px;width:2px;height:1px;background:#f2f2f2"></div>
<div style="left:259px;top:701px;width:2px;height:1px;background:#f2f2f2"></div>
<div style="left:259px;top:707px;width:2px;height:1px;background:#f2f2f2"></div>
<div style="left:259px;top:731px;width:2px;height:1px;background:#f2f2f2"></div>
<div style="left:259px;top:737px;width:2px;height:1px;background:#f2f2f2"></div>
<div style="left:259px;top:743px;width:2px;height:1px;background:#f2f2f2"></div>
<div style="left:259px;top:749px;width:2px;height:1px;background:#f2f2f2"></div>
<div style="left:259px;top:755px;width:2px;height:1px;background:#f2f2f2"></div>
<div style="left:259px;top:761px;width:2px;height:1px;background:#f2f2f2"></div>
<div style="left:257px;top:767px;width:6px;height:1px;background:#f2f2f2"></div>
<div style="left:259px;top:773px;width:2px;height:1px;background:#f2f2f2"></div>
<div style="left:259px;top:779px;width:2px;height:1px;background:#f2f2f2"></div>
<div style="left:259px;top:785px;width:2px;height:1px;background:#f2f2f2"></div>
<svg style="left:256px;top:330px" width="6" height="11" viewBox="0 0 6 11"><rect x="3.6" y="1" width="1.3" height="9" fill="#ececec"/><path d="M0.8 3.4L4.3 1.3" stroke="#ececec" stroke-width="1.1"/></svg>
<span class="t" style="left:256px;top:426px;font-size:12px;color:#e8e8e8;">2</span>
<span class="t" style="left:256px;top:522px;font-size:12px;color:#e8e8e8;">3</span>
<span class="t" style="left:256px;top:618px;font-size:12px;color:#e8e8e8;">4</span>
<span class="t" style="left:256px;top:714px;font-size:12px;color:#e8e8e8;">5</span>
<div style="left:554px;top:101px;width:96px;height:16px;background:#646665"></div>
<div style="left:650px;top:101px;width:624px;height:16px;background:#7f7f7f"></div>
<div style="left:1274px;top:101px;width:96px;height:16px;background:#646665"></div>
<div style="left:560px;top:108px;width:1px;height:2px;background:#f2f2f2"></div>
<div style="left:566px;top:108px;width:1px;height:2px;background:#f2f2f2"></div>
<div style="left:572px;top:108px;width:1px;height:2px;background:#f2f2f2"></div>
<div style="left:578px;top:108px;width:1px;height:2px;background:#f2f2f2"></div>
<div style="left:584px;top:108px;width:1px;height:2px;background:#f2f2f2"></div>
<div style="left:590px;top:108px;width:1px;height:2px;background:#f2f2f2"></div>
<div style="left:596px;top:108px;width:1px;height:2px;background:#f2f2f2"></div>
<div style="left:602px;top:106px;width:1px;height:6px;background:#f2f2f2"></div>
<div style="left:608px;top:108px;width:1px;height:2px;background:#f2f2f2"></div>
<div style="left:614px;top:108px;width:1px;height:2px;background:#f2f2f2"></div>
<div style="left:620px;top:108px;width:1px;height:2px;background:#f2f2f2"></div>
<div style="left:626px;top:108px;width:1px;height:2px;background:#f2f2f2"></div>
<div style="left:632px;top:108px;width:1px;height:2px;background:#f2f2f2"></div>
<div style="left:638px;top:108px;width:1px;height:2px;background:#f2f2f2"></div>
<div style="left:644px;top:108px;width:1px;height:2px;background:#f2f2f2"></div>
<div style="left:656px;top:108px;width:1px;height:2px;background:#f2f2f2"></div>
<div style="left:662px;top:108px;width:1px;height:2px;background:#f2f2f2"></div>
<div style="left:668px;top:108px;width:1px;height:2px;background:#f2f2f2"></div>
<div style="left:674px;top:108px;width:1px;height:2px;background:#f2f2f2"></div>
<div style="left:680px;top:108px;width:1px;height:2px;background:#f2f2f2"></div>
<div style="left:686px;top:108px;width:1px;height:2px;background:#f2f2f2"></div>
<div style="left:692px;top:108px;width:1px;height:2px;background:#f2f2f2"></div>
<div style="left:698px;top:106px;width:1px;height:6px;background:#f2f2f2"></div>
<div style="left:704px;top:108px;width:1px;height:2px;background:#f2f2f2"></div>
<div style="left:710px;top:108px;width:1px;height:2px;background:#f2f2f2"></div>
<div style="left:716px;top:108px;width:1px;height:2px;background:#f2f2f2"></div>
<div style="left:722px;top:108px;width:1px;height:2px;background:#f2f2f2"></div>
<div style="left:728px;top:108px;width:1px;height:2px;background:#f2f2f2"></div>
<div style="left:734px;top:108px;width:1px;height:2px;background:#f2f2f2"></div>
<div style="left:740px;top:108px;width:1px;height:2px;background:#f2f2f2"></div>
<div style="left:752px;top:108px;width:1px;height:2px;background:#f2f2f2"></div>
<div style="left:758px;top:108px;width:1px;height:2px;background:#f2f2f2"></div>
<div style="left:764px;top:108px;width:1px;height:2px;background:#f2f2f2"></div>
<div style="left:770px;top:108px;width:1px;height:2px;background:#f2f2f2"></div>
<div style="left:776px;top:108px;width:1px;height:2px;background:#f2f2f2"></div>
<div style="left:782px;top:108px;width:1px;height:2px;background:#f2f2f2"></div>
<div style="left:788px;top:108px;width:1px;height:2px;background:#f2f2f2"></div>
<div style="left:794px;top:106px;width:1px;height:6px;background:#f2f2f2"></div>
<div style="left:800px;top:108px;width:1px;height:2px;background:#f2f2f2"></div>
<div style="left:806px;top:108px;width:1px;height:2px;background:#f2f2f2"></div>
<div style="left:812px;top:108px;width:1px;height:2px;background:#f2f2f2"></div>
<div style="left:818px;top:108px;width:1px;height:2px;background:#f2f2f2"></div>
<div style="left:824px;top:108px;width:1px;height:2px;background:#f2f2f2"></div>
<div style="left:830px;top:108px;width:1px;height:2px;background:#f2f2f2"></div>
<div style="left:836px;top:108px;width:1px;height:2px;background:#f2f2f2"></div>
<div style="left:848px;top:108px;width:1px;height:2px;background:#f2f2f2"></div>
<div style="left:854px;top:108px;width:1px;height:2px;background:#f2f2f2"></div>
<div style="left:860px;top:108px;width:1px;height:2px;background:#f2f2f2"></div>
<div style="left:866px;top:108px;width:1px;height:2px;background:#f2f2f2"></div>
<div style="left:872px;top:108px;width:1px;height:2px;background:#f2f2f2"></div>
<div style="left:878px;top:108px;width:1px;height:2px;background:#f2f2f2"></div>
<div style="left:884px;top:108px;width:1px;height:2px;background:#f2f2f2"></div>
<div style="left:890px;top:106px;width:1px;height:6px;background:#f2f2f2"></div>
<div style="left:896px;top:108px;width:1px;height:2px;background:#f2f2f2"></div>
<div style="left:902px;top:108px;width:1px;height:2px;background:#f2f2f2"></div>
<div style="left:908px;top:108px;width:1px;height:2px;background:#f2f2f2"></div>
<div style="left:914px;top:108px;width:1px;height:2px;background:#f2f2f2"></div>
<div style="left:920px;top:108px;width:1px;height:2px;background:#f2f2f2"></div>
<div style="left:926px;top:108px;width:1px;height:2px;background:#f2f2f2"></div>
<div style="left:932px;top:108px;width:1px;height:2px;background:#f2f2f2"></div>
<div style="left:944px;top:108px;width:1px;height:2px;background:#f2f2f2"></div>
<div style="left:950px;top:108px;width:1px;height:2px;background:#f2f2f2"></div>
<div style="left:956px;top:108px;width:1px;height:2px;background:#f2f2f2"></div>
<div style="left:962px;top:108px;width:1px;height:2px;background:#f2f2f2"></div>
<div style="left:968px;top:108px;width:1px;height:2px;background:#f2f2f2"></div>
<div style="left:974px;top:108px;width:1px;height:2px;background:#f2f2f2"></div>
<div style="left:980px;top:108px;width:1px;height:2px;background:#f2f2f2"></div>
<div style="left:986px;top:106px;width:1px;height:6px;background:#f2f2f2"></div>
<div style="left:992px;top:108px;width:1px;height:2px;background:#f2f2f2"></div>
<div style="left:998px;top:108px;width:1px;height:2px;background:#f2f2f2"></div>
<div style="left:1004px;top:108px;width:1px;height:2px;background:#f2f2f2"></div>
<div style="left:1010px;top:108px;width:1px;height:2px;background:#f2f2f2"></div>
<div style="left:1016px;top:108px;width:1px;height:2px;background:#f2f2f2"></div>
<div style="left:1022px;top:108px;width:1px;height:2px;background:#f2f2f2"></div>
<div style="left:1028px;top:108px;width:1px;height:2px;background:#f2f2f2"></div>
<div style="left:1040px;top:108px;width:1px;height:2px;background:#f2f2f2"></div>
<div style="left:1046px;top:108px;width:1px;height:2px;background:#f2f2f2"></div>
<div style="left:1052px;top:108px;width:1px;height:2px;background:#f2f2f2"></div>
<div style="left:1058px;top:108px;width:1px;height:2px;background:#f2f2f2"></div>
<div style="left:1064px;top:108px;width:1px;height:2px;background:#f2f2f2"></div>
<div style="left:1070px;top:108px;width:1px;height:2px;background:#f2f2f2"></div>
<div style="left:1076px;top:108px;width:1px;height:2px;background:#f2f2f2"></div>
<div style="left:1082px;top:106px;width:1px;height:6px;background:#f2f2f2"></div>
<div style="left:1088px;top:108px;width:1px;height:2px;background:#f2f2f2"></div>
<div style="left:1094px;top:108px;width:1px;height:2px;background:#f2f2f2"></div>
<div style="left:1100px;top:108px;width:1px;height:2px;background:#f2f2f2"></div>
<div style="left:1106px;top:108px;width:1px;height:2px;background:#f2f2f2"></div>
<div style="left:1112px;top:108px;width:1px;height:2px;background:#f2f2f2"></div>
<div style="left:1118px;top:108px;width:1px;height:2px;background:#f2f2f2"></div>
<div style="left:1124px;top:108px;width:1px;height:2px;background:#f2f2f2"></div>
<div style="left:1136px;top:108px;width:1px;height:2px;background:#f2f2f2"></div>
<div style="left:1142px;top:108px;width:1px;height:2px;background:#f2f2f2"></div>
<div style="left:1148px;top:108px;width:1px;height:2px;background:#f2f2f2"></div>
<div style="left:1154px;top:108px;width:1px;height:2px;background:#f2f2f2"></div>
<div style="left:1160px;top:108px;width:1px;height:2px;background:#f2f2f2"></div>
<div style="left:1166px;top:108px;width:1px;height:2px;background:#f2f2f2"></div>
<div style="left:1172px;top:108px;width:1px;height:2px;background:#f2f2f2"></div>
<div style="left:1178px;top:106px;width:1px;height:6px;background:#f2f2f2"></div>
<div style="left:1184px;top:108px;width:1px;height:2px;background:#f2f2f2"></div>
<div style="left:1190px;top:108px;width:1px;height:2px;background:#f2f2f2"></div>
<div style="left:1196px;top:108px;width:1px;height:2px;background:#f2f2f2"></div>
<div style="left:1202px;top:108px;width:1px;height:2px;background:#f2f2f2"></div>
<div style="left:1208px;top:108px;width:1px;height:2px;background:#f2f2f2"></div>
<div style="left:1214px;top:108px;width:1px;height:2px;background:#f2f2f2"></div>
<div style="left:1220px;top:108px;width:1px;height:2px;background:#f2f2f2"></div>
<div style="left:1232px;top:108px;width:1px;height:2px;background:#f2f2f2"></div>
<div style="left:1238px;top:108px;width:1px;height:2px;background:#f2f2f2"></div>
<div style="left:1244px;top:108px;width:1px;height:2px;background:#f2f2f2"></div>
<div style="left:1250px;top:108px;width:1px;height:2px;background:#f2f2f2"></div>
<div style="left:1256px;top:108px;width:1px;height:2px;background:#f2f2f2"></div>
<div style="left:1262px;top:108px;width:1px;height:2px;background:#f2f2f2"></div>
<div style="left:1268px;top:108px;width:1px;height:2px;background:#f2f2f2"></div>
<div style="left:1274px;top:106px;width:1px;height:6px;background:#f2f2f2"></div>
<div style="left:1280px;top:108px;width:1px;height:2px;background:#f2f2f2"></div>
<div style="left:1286px;top:108px;width:1px;height:2px;background:#f2f2f2"></div>
<div style="left:1292px;top:108px;width:1px;height:2px;background:#f2f2f2"></div>
<div style="left:1298px;top:108px;width:1px;height:2px;background:#f2f2f2"></div>
<div style="left:1304px;top:108px;width:1px;height:2px;background:#f2f2f2"></div>
<div style="left:1310px;top:108px;width:1px;height:2px;background:#f2f2f2"></div>
<div style="left:1316px;top:108px;width:1px;height:2px;background:#f2f2f2"></div>
<div style="left:1328px;top:108px;width:1px;height:2px;background:#f2f2f2"></div>
<div style="left:1334px;top:108px;width:1px;height:2px;background:#f2f2f2"></div>
<div style="left:1340px;top:108px;width:1px;height:2px;background:#f2f2f2"></div>
<div style="left:1346px;top:108px;width:1px;height:2px;background:#f2f2f2"></div>
<div style="left:1352px;top:108px;width:1px;height:2px;background:#f2f2f2"></div>
<div style="left:1358px;top:108px;width:1px;height:2px;background:#f2f2f2"></div>
<div style="left:1364px;top:108px;width:1px;height:2px;background:#f2f2f2"></div>
<svg style="left:742px;top:103px" width="6" height="11" viewBox="0 0 6 11"><rect x="3.6" y="1" width="1.3" height="9" fill="#ececec"/><path d="M0.8 3.4L4.3 1.3" stroke="#ececec" stroke-width="1.1"/></svg>
<span class="t" style="left:839px;top:103px;font-size:12px;color:#e8e8e8;">2</span>
<span class="t" style="left:935px;top:103px;font-size:12px;color:#e8e8e8;">3</span>
<span class="t" style="left:1031px;top:103px;font-size:12px;color:#e8e8e8;">4</span>
<span class="t" style="left:1127px;top:103px;font-size:12px;color:#e8e8e8;">5</span>
<span class="t" style="left:1223px;top:103px;font-size:12px;color:#e8e8e8;">6</span>
<span class="t" style="left:1319px;top:103px;font-size:12px;color:#e8e8e8;">7</span>
<div style="left:698px;top:118px;width:1px;height:3px;background:#a8a8a8"></div>
<div style="left:746px;top:118px;width:1px;height:3px;background:#a8a8a8"></div>
<div style="left:794px;top:118px;width:1px;height:3px;background:#a8a8a8"></div>
<div style="left:842px;top:118px;width:1px;height:3px;background:#a8a8a8"></div>
<div style="left:890px;top:118px;width:1px;height:3px;background:#a8a8a8"></div>
<div style="left:938px;top:118px;width:1px;height:3px;background:#a8a8a8"></div>
<div style="left:986px;top:118px;width:1px;height:3px;background:#a8a8a8"></div>
<div style="left:1034px;top:118px;width:1px;height:3px;background:#a8a8a8"></div>
<div style="left:1082px;top:118px;width:1px;height:3px;background:#a8a8a8"></div>
<div style="left:1130px;top:118px;width:1px;height:3px;background:#a8a8a8"></div>
<div style="left:1178px;top:118px;width:1px;height:3px;background:#a8a8a8"></div>
<div style="left:1226px;top:118px;width:1px;height:3px;background:#a8a8a8"></div>
<svg style="left:645px;top:99px" width="11" height="26" viewBox="0 0 11 26"><path d="M1 1H10V5L5.5 9.5L1 5Z" fill="#d8d8d8" stroke="#5a5a5a" stroke-width="0.8"/><path d="M5.5 10.5L10 14.5V17.5H1V14.5Z" fill="#d8d8d8" stroke="#5a5a5a" stroke-width="0.8"/><rect x="1" y="18.5" width="9" height="6" fill="#d8d8d8" stroke="#5a5a5a" stroke-width="0.8"/></svg>
<div style="left:1274px;top:101px;width:1px;height:7px;background:#f4f4f4"></div>
<svg style="left:1269px;top:109px" width="11" height="8" viewBox="0 0 11 8"><path d="M5.5 0.5L10 4.5V7.5H1V4.5Z" fill="#d8d8d8" stroke="#5a5a5a" stroke-width="1"/></svg>
<div style="left:554px;top:143px;width:816px;height:660px;background:#ffffff;border:1px solid #e2e2e2;border-bottom:none;box-sizing:border-box"></div>
<div style="left:649px;top:143px;width:1px;height:660px;background:repeating-linear-gradient(to bottom,#8a8a8a 0 1px,transparent 1px 2px)"></div>
<div style="left:1274px;top:143px;width:1px;height:660px;background:repeating-linear-gradient(to bottom,#8a8a8a 0 1px,transparent 1px 2px)"></div>
<div style="left:554px;top:238px;width:816px;height:1px;background:repeating-linear-gradient(to right,#8a8a8a 0 1px,transparent 1px 2px)"></div>
</body></html>
